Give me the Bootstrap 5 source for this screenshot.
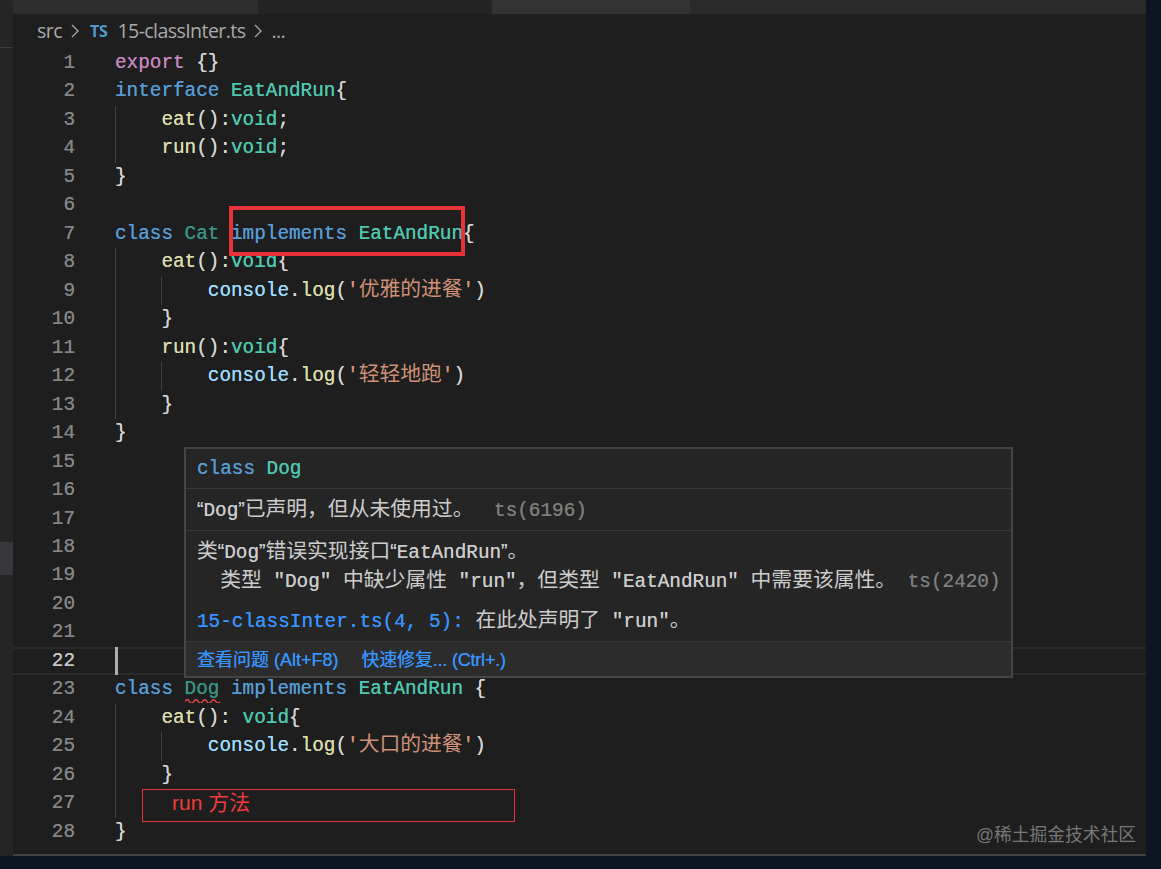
<!DOCTYPE html>
<html lang="zh">
<head>
<meta charset="utf-8">
<link href="https://cdn.jsdelivr.net/npm/bootstrap@5.3.0/dist/css/bootstrap.min.css" rel="stylesheet">
<style>
html,body{height:100%}
body{background:#0d1422;overflow:hidden;font-family:"Liberation Sans","Noto Sans CJK SC",sans-serif}
.shell{width:1146px;height:856px;background:#1e1e1e;position:relative}
.sidebar{width:13px;background:#252526;flex:none}
.sidebar-tick{height:1px;margin-top:47px;background:#3c3c3c}
.sidebar-spot{height:33px;margin-top:494px;background:#37373d}
.main-area{min-width:0;border-bottom:2px solid #424242}
.tabstrip{height:14px;background:#2a2a2a;flex:none}
.tab-a{width:245px;background:#2e2e2e}
.tab-gap{width:234px;background:#242424}
.tab-b{width:198px;background:#333}
.crumbs{height:35px;padding:0 0 2px 24px;color:#a9a9a9;font-size:19.6px;letter-spacing:-.6px;font-family:"Open Sans","Noto Sans CJK SC",sans-serif}
.crumb-sep{margin:0 2px 0 3px}
.ts-mark{color:#4f9bd1;font-weight:700;font-size:16px;letter-spacing:-.3px}
.file-name{margin-left:10px}
.dots{margin-left:6px}
.code-block{font-family:"Liberation Mono","Noto Sans CJK SC",monospace;font-size:19.33px;color:#d4d4d4;position:relative;flex:1;text-shadow:0 0 .6px currentColor}
.ln{height:28.48px;line-height:28.48px;white-space:pre;position:relative}
.num{display:inline-block;width:62px;text-align:right;color:#858585;margin-right:40px}
.cur .num{color:#c6c6c6}
.cur{border-top:2px solid #2a2a2a;border-bottom:2px solid #2a2a2a;line-height:24.48px}
.caret{display:inline-block;width:3px;height:28px;background:#aeafad;vertical-align:top;margin-top:-2px}
.k{color:#569cd6}.p{color:#c586c0}.t{color:#4ec9b0}.f{color:#dcdcaa}.v{color:#9cdcfe}.s{color:#ce9178}
.t-dim{color:#3a9384}
.zh{font-family:"Noto Sans CJK SC",sans-serif;font-size:20.8px;line-height:1;text-shadow:none}
.qt{font-family:"Liberation Sans",sans-serif}
.g1::before,.g2::after{content:"";position:absolute;top:0;bottom:0;width:1px;background:#404040}
.g1::before{left:102px}
.g2::after{left:148px}
.squiggle{position:relative;display:inline-block}
.wave{position:absolute;left:0;bottom:1px;width:35px;height:5px}
.hover-box{position:absolute;left:184px;top:447px;width:829px;height:231px;background:#252526;border:2px solid #454545;font-size:19.33px;line-height:28.5px;z-index:3;text-shadow:0 0 .5px currentColor}
.hover-row{padding:0 11px;border-bottom:1px solid #383838;color:#cccccc}
.row-head{height:40px;padding-top:2px}
.row-note{height:42px;padding-top:3px}
.row-detail{height:111px;padding-top:7px}
.decl{margin-top:12px}
.mono{font-family:"Liberation Mono","Noto Sans CJK SC",monospace;white-space:pre}
.muted-code{color:#7d7d7d}
.note-code{margin-left:9px}
.link-code{color:#3794ff}
.hover-foot{background:#2c2c2d;color:#3794ff;font-size:18px;flex:1;gap:23px;padding:3px 0 0 11px}
.foot-second{letter-spacing:-.2px}
.mark-red{position:absolute;z-index:2;pointer-events:none}
.mark-thick{left:229px;top:206px;width:236px;height:50px;border:4px solid #e8323a}
.mark-thin{left:142px;top:789px;width:373px;height:33px;border:1px solid #e8323a;color:#f03b3b;font-size:21px;line-height:26px;padding-left:29px;font-family:"Liberation Sans","Noto Sans CJK SC",sans-serif}
.stamp{position:absolute;right:10px;bottom:7px;color:#777;font-size:17.75px;z-index:2}
</style>
</head>
<body>
<div class="shell d-flex">
  <div class="sidebar"><div class="sidebar-tick"></div><div class="sidebar-spot"></div></div>
  <div class="main-area flex-grow-1 d-flex flex-column">
    <div class="tabstrip d-flex"><div class="tab-a"></div><div class="tab-gap"></div><div class="tab-b"></div></div>
    <div class="crumbs d-flex align-items-center">
      <span>src</span>
      <svg class="crumb-sep ms-2" width="10" height="16" viewBox="0 0 10 16"><path d="M2 2l6 6-6 6" fill="none" stroke="#a9a9a9" stroke-width="1.3"/></svg>
      <span class="ts-mark ms-2">TS</span>
      <span class="file-name">15-classInter.ts</span>
      <svg class="crumb-sep ms-2" width="10" height="16" viewBox="0 0 10 16"><path d="M2 2l6 6-6 6" fill="none" stroke="#a9a9a9" stroke-width="1.3"/></svg>
      <span class="dots">...</span>
    </div>
    <div class="code-block">
      <div class="ln"><span class="num">1</span><span class="p">export</span> {}</div>
      <div class="ln"><span class="num">2</span><span class="k">interface</span> <span class="t">EatAndRun</span>{</div>
      <div class="ln g1"><span class="num">3</span>    <span class="f">eat</span>():<span class="t">void</span>;</div>
      <div class="ln g1"><span class="num">4</span>    <span class="f">run</span>():<span class="t">void</span>;</div>
      <div class="ln"><span class="num">5</span>}</div>
      <div class="ln"><span class="num">6</span></div>
      <div class="ln"><span class="num">7</span><span class="k">class</span> <span class="t-dim">Cat</span> <span class="k">implements</span> <span class="t">EatAndRun</span>{</div>
      <div class="ln g1"><span class="num">8</span>    <span class="f">eat</span>():<span class="t">void</span>{</div>
      <div class="ln g1 g2"><span class="num">9</span>        <span class="v">console</span>.<span class="f">log</span>(<span class="s">'<span class="zh">优雅的进餐</span>'</span>)</div>
      <div class="ln g1"><span class="num">10</span>    }</div>
      <div class="ln g1"><span class="num">11</span>    <span class="f">run</span>():<span class="t">void</span>{</div>
      <div class="ln g1 g2"><span class="num">12</span>        <span class="v">console</span>.<span class="f">log</span>(<span class="s">'<span class="zh">轻轻地跑</span>'</span>)</div>
      <div class="ln g1"><span class="num">13</span>    }</div>
      <div class="ln"><span class="num">14</span>}</div>
      <div class="ln"><span class="num">15</span></div>
      <div class="ln"><span class="num">16</span></div>
      <div class="ln"><span class="num">17</span></div>
      <div class="ln"><span class="num">18</span></div>
      <div class="ln"><span class="num">19</span></div>
      <div class="ln"><span class="num">20</span></div>
      <div class="ln"><span class="num">21</span></div>
      <div class="ln cur"><span class="num">22</span><span class="caret"></span></div>
      <div class="ln"><span class="num">23</span><span class="k">class</span> <span class="t-dim squiggle">Dog<svg class="wave" viewBox="0 0 35 5"><path d="M0 3.500q2.200-3.500 4.400 0t4.400 0 4.400 0 4.400 0 4.400 0 4.400 0 4.400 0 4.400 0" fill="none" stroke="#f14c4c" stroke-width="1.300"/></svg></span> <span class="k">implements</span> <span class="t">EatAndRun</span> {</div>
      <div class="ln g1"><span class="num">24</span>    <span class="f">eat</span>(): <span class="t">void</span>{</div>
      <div class="ln g1 g2"><span class="num">25</span>        <span class="v">console</span>.<span class="f">log</span>(<span class="s">'<span class="zh">大口的进餐</span>'</span>)</div>
      <div class="ln g1"><span class="num">26</span>    }</div>
      <div class="ln g1"><span class="num">27</span></div>
      <div class="ln"><span class="num">28</span>}</div>
    </div>
  </div>
  <div class="hover-box d-flex flex-column">
    <div class="hover-row row-head mono d-flex align-items-center"><span><span class="k">class</span> <span class="t">Dog</span></span></div>
    <div class="hover-row row-note d-flex align-items-center"><span class="mono"><span class="qt">“</span>Dog<span class="qt">”</span><span class="zh">已声明，但从未使用过。</span> <span class="muted-code note-code">ts(6196)</span></span></div>
    <div class="hover-row row-detail mono"><span class="zh">类</span><span class="qt">“</span>Dog<span class="qt">”</span><span class="zh">错误实现接口</span><span class="qt">“</span>EatAndRun<span class="qt">”</span><span class="zh">。</span>
  <span class="zh">类型</span> "Dog" <span class="zh">中缺少属性</span> "run"<span class="zh">，但类型</span> "EatAndRun" <span class="zh">中需要该属性。</span> <span class="muted-code">ts(2420)</span>
<div class="decl"><span class="link-code">15-classInter.ts(4, 5):</span> <span class="zh">在此处声明了</span> "run"<span class="zh">。</span></div></div>
    <div class="hover-foot d-flex align-items-center"><span>查看问题 (Alt+F8)</span><span class="foot-second">快速修复... (Ctrl+.)</span></div>
  </div>
  <div class="mark-red mark-thick"></div>
  <div class="mark-red mark-thin">run 方法</div>
  <div class="stamp">@稀土掘金技术社区</div>
</div>
<script src="https://cdn.jsdelivr.net/npm/bootstrap@5.3.0/dist/js/bootstrap.bundle.min.js"></script>
</body>
</html>
